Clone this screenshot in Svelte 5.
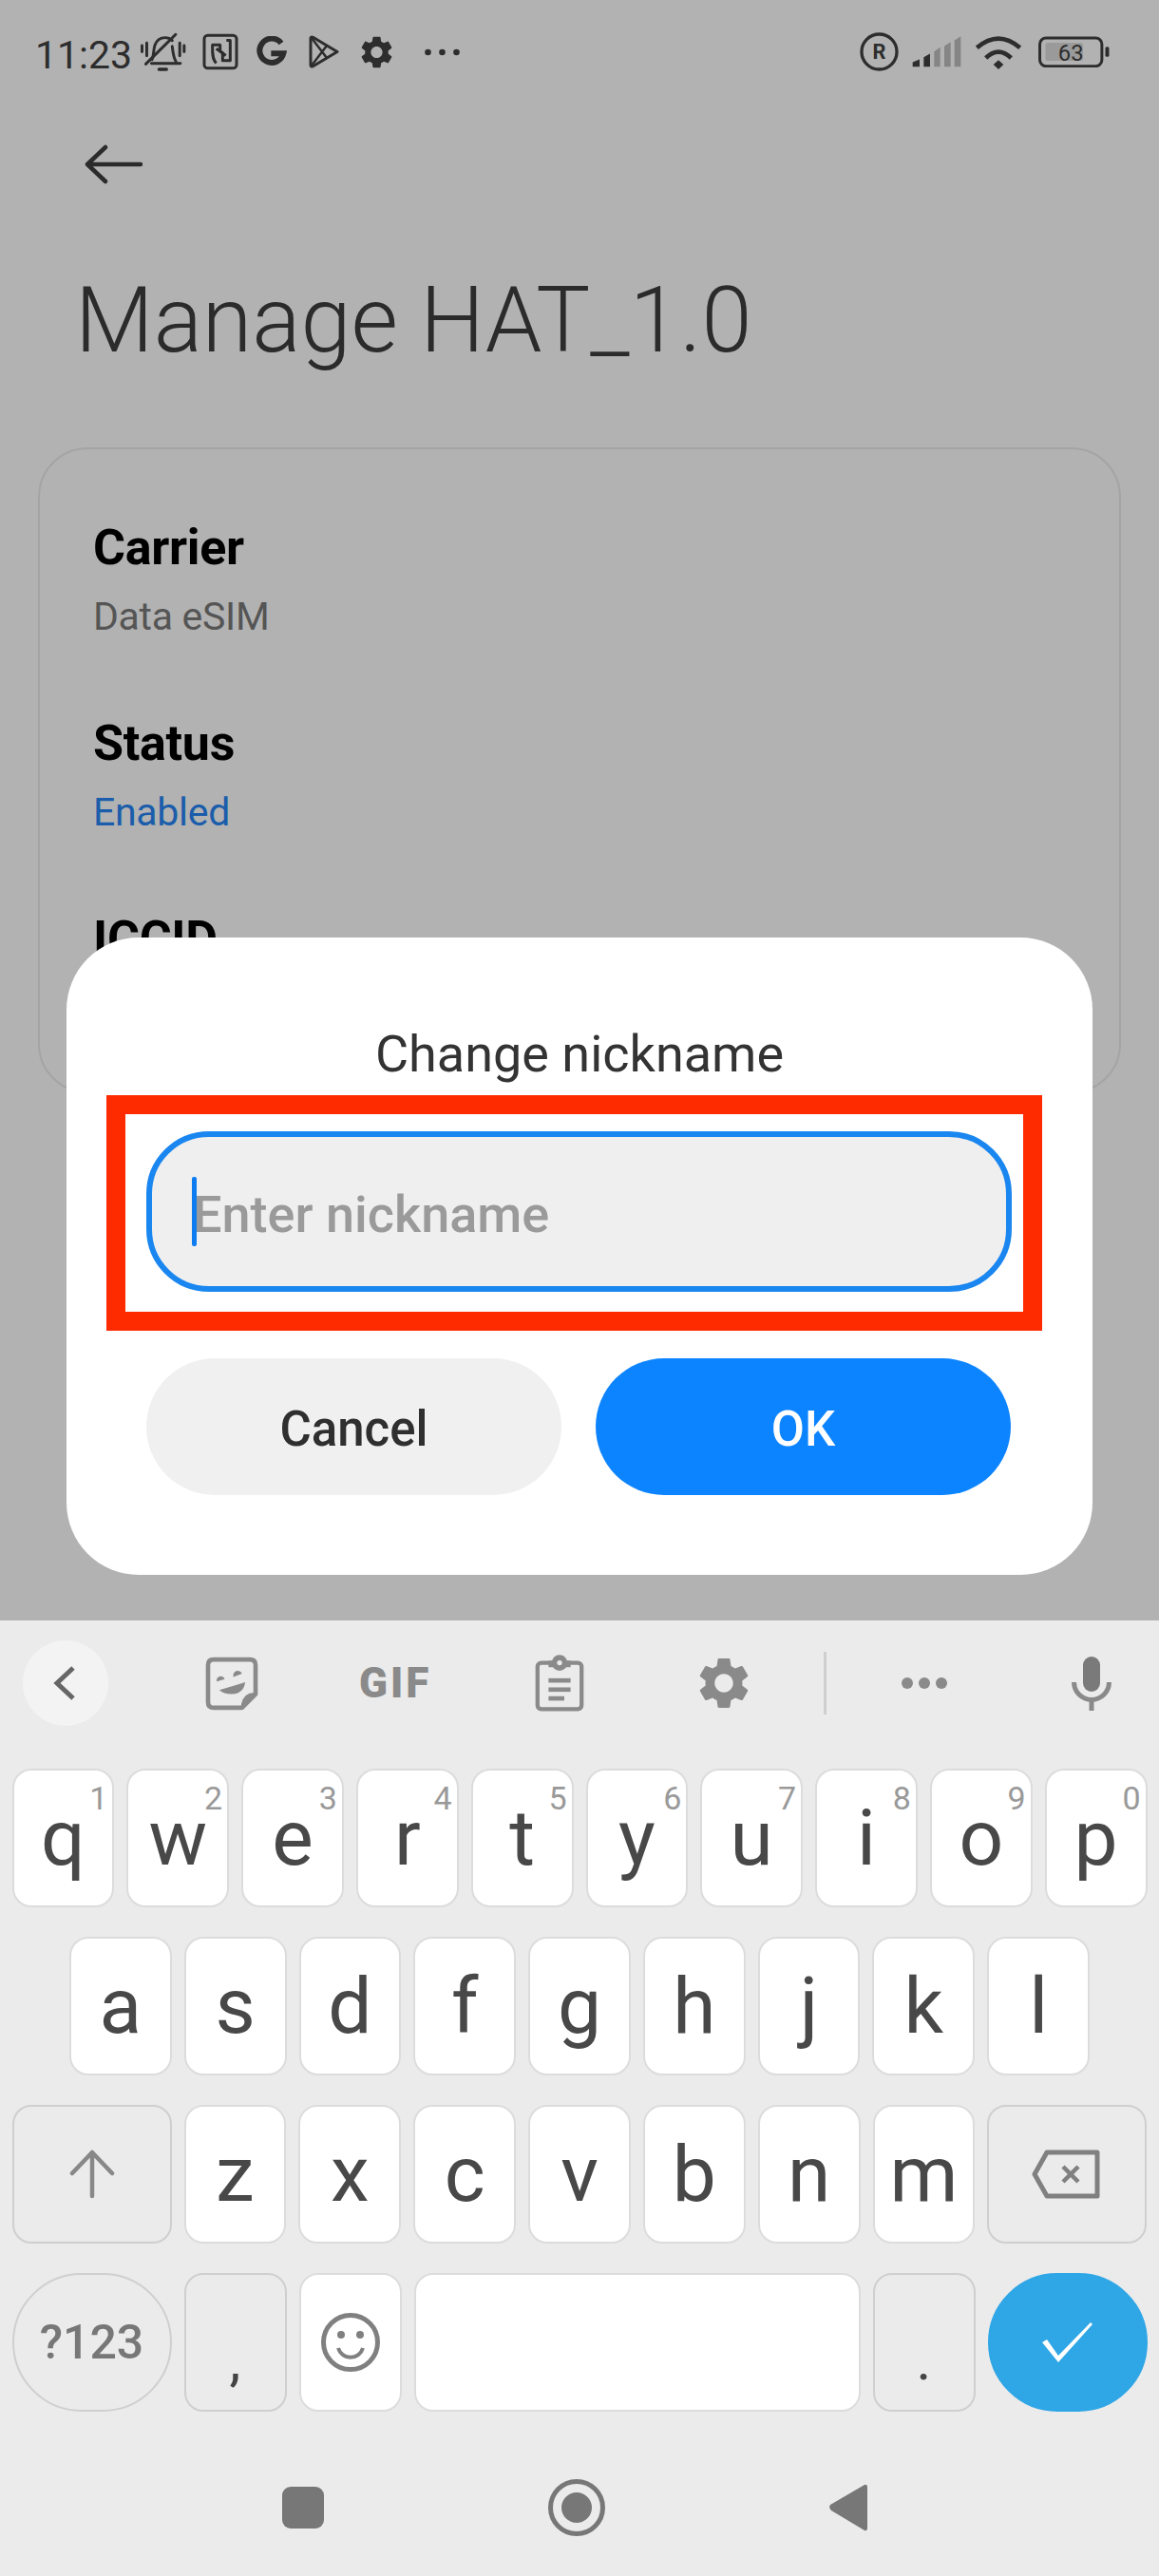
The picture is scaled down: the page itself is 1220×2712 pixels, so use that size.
<script lang="ts">
  const ROW1 = [
    ['q', '1'], ['w', '2'], ['e', '3'], ['r', '4'], ['t', '5'],
    ['y', '6'], ['u', '7'], ['i', '8'], ['o', '9'], ['p', '0'],
  ];
  const ROW2 = ['a', 's', 'd', 'f', 'g', 'h', 'j', 'k', 'l'];
  const ROW3 = ['z', 'x', 'c', 'v', 'b', 'n', 'm'];
  const GEAR =
    'M19.14 12.94c.04-.3.06-.61.06-.94 0-.32-.02-.64-.07-.94l2.03-1.58c.18-.14.23-.41.12-.61l-1.92-3.32c-.12-.22-.37-.29-.59-.22l-2.39.96c-.5-.38-1.03-.7-1.62-.94l-.36-2.54c-.04-.24-.24-.41-.48-.41h-3.84c-.24 0-.43.17-.47.41l-.36 2.54c-.59.24-1.13.57-1.62.94l-2.39-.96c-.22-.08-.47 0-.59.22L2.74 8.87c-.12.21-.08.47.12.61l2.03 1.58c-.05.3-.09.63-.09.94s.02.64.07.94l-2.03 1.58c-.18.14-.23.41-.12.61l1.92 3.32c.12.22.37.29.59.22l2.39-.96c.5.38 1.03.7 1.62.94l.36 2.54c.05.24.24.41.48.41h3.84c.24 0 .44-.17.47-.41l.36-2.54c.59-.24 1.13-.56 1.62-.94l2.39.96c.22.08.47 0 .59-.22l1.92-3.32c.12-.22.07-.47-.12-.61l-2.01-1.58zM12 15.6c-1.98 0-3.6-1.62-3.6-3.6s1.62-3.6 3.6-3.6 3.6 1.62 3.6 3.6-1.62 3.6-3.6 3.6z';
</script>

<div class="screen">
  <div class="page">
    <div class="status">
      <span class="time">11:23</span>
      <svg class="st-bell" viewBox="15 10 165 130" fill="none" stroke="#2d2d2d" stroke-width="9" stroke-linecap="round">
        <path d="M28 55V75M43 47V88M148 47V88M162 55V75" />
        <path d="M60 100c6-14 4-32 9-46 5-15 18-24 33-24 9 0 16 3 22 9M124 58c3 18 3 34 12 48" />
        <path d="M40 114L135 20M58 112H150" />
        <path d="M82 131H106" stroke-width="10" />
      </svg>
      <svg class="st-nfc" viewBox="218 14 114 116" fill="none" stroke="#2d2d2d" stroke-width="9" stroke-linejoin="round">
        <rect x="224" y="20" width="102" height="104" rx="11" />
        <path d="M262 108C248 95 250 70 250 50H274V70L292 84" />
        <path d="M294 36H306V100H282V76L262 62" />
      </svg>
      <svg class="st-g" viewBox="390 26 102 98" fill="none" stroke="#2d2d2d" stroke-width="18">
        <path d="M474 48A38 38 0 1 0 481 80H442" />
      </svg>
      <svg class="st-play" viewBox="0 0 33 35" fill="none" stroke="#2d2d2d" stroke-width="3" stroke-linejoin="round">
        <path d="M3 3.5c0-1.500 1-2 2.500-1.200L31 17.500 5.500 32.700C4 33.500 3 33 3 31.500z" />
        <path d="M4 3L20 24M4 32L20 11" stroke-width="2.500" />
      </svg>
      <svg class="st-gear" viewBox="2.400 2 19.200 20" fill="#2d2d2d"><path d={GEAR} /></svg>
      <svg class="st-dots" viewBox="0 0 37 8" fill="#2d2d2d">
        <circle cx="3.500" cy="4" r="3.300" /><circle cx="18.500" cy="4" r="3.300" /><circle cx="33.500" cy="4" r="3.300" />
      </svg>
      <svg class="st-reg" viewBox="20 14 124 124" fill="none">
        <circle cx="82" cy="76" r="56" stroke="#2d2d2d" stroke-width="10" />
        <text x="82" y="100" text-anchor="middle" class="reg-r">R</text>
      </svg>
      <svg class="st-signal" viewBox="188 26 156 98">
        <path d="M190 122V108L212 99V122Z" fill="#2d2d2d" />
        <path d="M225 122V92L245 81V122Z" fill="#2d2d2d" />
        <path d="M258 122V74L277 61V122Z" fill="#858585" />
        <path d="M290 122V57L310 44V122Z" fill="#858585" />
        <path d="M322 122V39L342 26V122Z" fill="#858585" />
      </svg>
      <svg class="st-wifi" viewBox="385 20 150 108" fill="none" stroke="#2d2d2d" stroke-width="14">
        <path d="M392 60Q460 2 528 60" />
        <path d="M420 92Q460 54 500 92" />
        <path d="M444 113L460 99L476 113L460 128Z" fill="#2d2d2d" stroke="none" />
      </svg>
      <svg class="st-batt" viewBox="583 24 230 100">
        <rect x="589" y="30" width="198" height="90" rx="20" fill="none" stroke="#2d2d2d" stroke-width="9" />
        <rect x="607" y="45" width="120" height="58" rx="7" fill="#9a9a9a" />
        <rect x="798" y="58" width="12" height="32" rx="5" fill="#2d2d2d" />
        <text x="688" y="103" text-anchor="middle" class="batt-n">63</text>
      </svg>
    </div>

    <svg class="back" viewBox="0 0 62 42" fill="none" stroke="#2b2b2b" stroke-width="4.500" stroke-linecap="round" stroke-linejoin="round">
      <path d="M3 21H59M22 3L3 21L22 39" />
    </svg>

    <h1>Manage HAT_1.0</h1>

    <div class="card">
      <div class="item"><div class="label">Carrier</div><div class="value">Data eSIM</div></div>
      <div class="item"><div class="label">Status</div><div class="value enabled">Enabled</div></div>
      <div class="item"><div class="label">ICCID</div></div>
    </div>

    <div class="dialog">
      <div class="dialog-title">Change nickname</div>
      <div class="annotation">
        <div class="field">
          <span class="caret"></span>
          <span class="placeholder">Enter nickname</span>
        </div>
      </div>
      <div class="actions">
        <div class="btn cancel">Cancel</div>
        <div class="btn ok">OK</div>
      </div>
    </div>
  </div>

  <div class="keyboard">
    <div class="toolbar">
      <div class="tb-back">
        <svg width="24" height="36" viewBox="0 0 24 36" fill="none" stroke="#666" stroke-width="5">
          <path d="M21 2L4 18L21 34" />
        </svg>
      </div>
      <svg class="tb-sticker" viewBox="48 41 169 171" fill="#8a8a8a">
        <path d="M165 203H75Q57 203 57 185V68Q57 50 75 50H190Q208 50 208 68V160Z" fill="none" stroke="#8a8a8a" stroke-width="14" stroke-linejoin="round" />
        <path d="M212 156Q165 150 160 208Z" />
        <path d="M85 120A13 13 0 0 1 110 112ZM138 105A13 13 0 0 1 165 95ZM93 147L175 122Q170 160 130 160Q108 160 93 147Z" />
      </svg>
      <span class="tb-gif">GIF</span>
      <svg class="tb-clip" viewBox="1093 36 154 181" fill="#8a8a8a">
        <rect x="1100" y="62" width="140" height="147" rx="12" fill="none" stroke="#8a8a8a" stroke-width="13" />
        <circle cx="1170" cy="62" r="25" />
        <rect x="1135" y="55" width="70" height="21" />
        <circle cx="1170" cy="62" r="8" fill="#ebebeb" />
        <rect x="1135" y="111" width="70" height="14" />
        <rect x="1135" y="140" width="70" height="14" />
        <rect x="1135" y="168" width="50" height="14" />
      </svg>
      <svg class="tb-gear" viewBox="2.400 2 19.200 20" fill="#8a8a8a"><path d={GEAR} /></svg>
      <div class="tb-divider"></div>
      <svg class="tb-dots" viewBox="0 0 48 14" fill="#8a8a8a">
        <circle cx="6" cy="7" r="6" /><circle cx="24" cy="7" r="6" /><circle cx="42" cy="7" r="6" />
      </svg>
      <svg class="tb-mic" viewBox="0 0 42 57" fill="none">
        <rect x="12" y="0" width="18" height="37" rx="9" fill="#7a7a7a" />
        <path d="M2.500 27A18.500 18.500 0 0 0 39.500 27M21 46V57" stroke="#8a8a8a" stroke-width="5" />
      </svg>
    </div>

    <div class="rows">
      <div class="row row-top">
        {#each ROW1 as [letter, digit]}
          <div class="key"><sup class="digit">{digit}</sup>{letter}</div>
        {/each}
      </div>
      <div class="row row-home">
        {#each ROW2 as letter}
          <div class="key">{letter}</div>
        {/each}
      </div>
      <div class="row row-shift">
        <div class="key fn">
          <svg width="48" height="52" viewBox="0 0 48 52" fill="none" stroke="#888" stroke-width="4.500" stroke-linecap="round" stroke-linejoin="round">
            <path d="M24 3V49M3 25L24 3L45 25" />
          </svg>
        </div>
        {#each ROW3 as letter}
          <div class="key">{letter}</div>
        {/each}
        <div class="key fn">
          <svg class="del" width="72" height="52" viewBox="0 0 72 52" fill="none" stroke="#808080" stroke-width="5" stroke-linejoin="round">
            <path d="M16 3H69V49H16L3 26Z" />
            <path d="M33 18L49 34M49 18L33 34" stroke-width="4.500" />
          </svg>
        </div>
      </div>
      <div class="row row-bottom">
        <div class="key fn pill sym">?123</div>
        <div class="key fn punct">,</div>
        <div class="key">
          <svg width="64" height="64" viewBox="0 0 64 64" fill="none" stroke="#808080" stroke-width="5">
            <circle cx="32" cy="32" r="28.500" />
            <circle cx="22" cy="24" r="4" fill="#808080" stroke="none" />
            <circle cx="42" cy="24" r="4" fill="#808080" stroke="none" />
            <path d="M19 38A13.500 13.500 0 0 0 45 38" stroke-width="4" />
          </svg>
        </div>
        <div class="key"></div>
        <div class="key fn punct">.</div>
        <div class="key pill enter">
          <svg width="56" height="44" viewBox="0 0 56 44" fill="#fff">
            <path d="M1 22L6 19L18 36L52 1L54 3L18 43Z" />
          </svg>
        </div>
      </div>
    </div>

    <div class="navbar">
      <div class="nav-square"></div>
      <div class="nav-home"></div>
      <svg width="40" height="50" viewBox="0 0 40 50" fill="#777"><path d="M37 1Q40 0 40 4V46Q40 50 37 49L2 28Q-1 25 1 22Z" /></svg>
    </div>
  </div>
</div>

<style>
  :global(body) {
    margin: 0;
    background: #ebebeb;
  }

  .screen {
    width: 1220px;
    height: 2712px;
    display: flex;
    flex-direction: column;
    overflow: hidden;
    font-family: Roboto, 'Liberation Sans', sans-serif;
  }

  .page {
    position: relative;
    height: 1706px;
    flex-shrink: 0;
    overflow: hidden;
    background: #b2b2b2;
  }

  /* status bar */
  .status {
    height: 109px;
    display: flex;
    align-items: center;
    padding-left: 37px;
    box-sizing: border-box;
  }

  .time {
    width: 100px;
    margin-top: 6px;
    font-size: 41px;
    line-height: 46px;
    color: #2d2d2d;
  }

  .st-bell { width: 55px; height: 43px; margin-left: 8px; }
  .st-nfc { width: 38px; height: 39px; margin-left: 13px; }
  .st-g { width: 34px; height: 33px; margin-left: 17px; }
  .st-play { width: 33px; height: 35px; margin-left: 22px; }
  .st-gear { width: 33px; height: 34px; margin-left: 23px; }
  .st-dots { width: 37px; height: 8px; margin-left: 34px; }
  .st-reg { width: 41px; height: 41px; margin-left: 421px; }
  .st-signal { width: 52px; height: 33px; margin-left: 14px; }
  .st-wifi { width: 50px; height: 36px; margin-left: 14px; }
  .st-batt { width: 77px; height: 33px; margin-left: 16px; }

  .reg-r {
    font-size: 66px;
    font-weight: 700;
    fill: #2d2d2d;
  }

  .batt-n {
    font-size: 72px;
    fill: #2d2d2d;
  }

  /* page behind the dialog */
  .back {
    display: block;
    width: 62px;
    height: 42px;
    margin: 43px 0 0 89px;
  }

  h1 {
    margin: 88px 0 0 79px;
    font-size: 95.5px;
    line-height: 110px;
    font-weight: 300;
    color: #2b2b2b;
    white-space: nowrap;
  }

  .card {
    width: 1140px;
    height: 680px;
    margin: 79px 0 0 40px;
    padding: 73px 0 0 56px;
    box-sizing: border-box;
    border: 2px solid #a4a4a4;
    border-radius: 52px;
    overflow: hidden;
  }

  .item {
    margin-bottom: 78px;
  }

  .label {
    font-size: 52px;
    line-height: 62px;
    font-weight: 700;
    letter-spacing: -0.3px;
    color: #000;
  }

  .value {
    margin-top: 16px;
    font-size: 41px;
    line-height: 50px;
    letter-spacing: -0.3px;
    color: #555;
  }

  .enabled {
    color: #1b5dab;
  }

  /* dialog */
  .dialog {
    position: absolute;
    left: 70px;
    top: 987px;
    width: 1080px;
    height: 671px;
    background: #fff;
    border-radius: 76px;
  }

  .dialog-title {
    height: 166px;
    padding-top: 93px;
    box-sizing: border-box;
    text-align: center;
    font-size: 54px;
    line-height: 60px;
    color: #333;
  }

  .annotation {
    width: 985px;
    height: 248px;
    margin-left: 42px;
    padding: 18px 0 0 22px;
    box-sizing: border-box;
    border: 20px solid #ff2b00;
  }

  .field {
    position: relative;
    width: 911px;
    height: 169px;
    display: flex;
    align-items: center;
    padding: 6px 0 0 43px;
    box-sizing: border-box;
    border: 6px solid #1a86f0;
    border-radius: 66px;
    background: #efefef;
  }

  .caret {
    position: absolute;
    left: 42px;
    top: 42px;
    width: 5px;
    height: 73px;
    border-radius: 2px;
    background: #0d7cf0;
  }

  .placeholder {
    font-size: 54px;
    font-weight: 500;
    color: #9a9a9a;
  }

  .actions {
    display: flex;
    gap: 36px;
    margin: 29px 0 0 84px;
  }

  .btn {
    width: 437px;
    height: 144px;
    padding-top: 5px;
    box-sizing: border-box;
    border-radius: 72px;
    display: flex;
    align-items: center;
    justify-content: center;
    font-size: 51px;
    font-weight: 500;
  }

  .cancel {
    background: #f0f0f0;
    color: #2f2f2f;
  }

  .ok {
    background: #0d84ff;
    color: #fff;
  }

  /* keyboard */
  .keyboard {
    flex: 1;
    background: #ebebeb;
  }

  .toolbar {
    height: 132px;
    display: flex;
    align-items: center;
    margin-bottom: 24px;
  }

  .tb-back {
    width: 90px;
    height: 90px;
    margin-left: 24px;
    border-radius: 50%;
    background: #f3f3f3;
    display: flex;
    align-items: center;
    justify-content: center;
  }

  .tb-back svg { margin-left: -2px; }
  .tb-sticker { width: 56px; height: 57px; margin-left: 102px; }

  .tb-gif {
    width: 72px;
    margin-left: 106px;
    font-size: 44px;
    line-height: 44px;
    font-weight: 900;
    letter-spacing: 3px;
    color: #8a8a8a;
    white-space: nowrap;
  }

  .tb-clip { width: 52px; height: 60px; margin-left: 113px; }
  .tb-gear { width: 54px; height: 54px; margin-left: 120px; }

  .tb-divider {
    width: 3px;
    height: 66px;
    margin-left: 78px;
    background: #cfcfcf;
  }

  .tb-dots { width: 48px; height: 14px; margin-left: 79px; }
  .tb-mic { width: 42px; height: 57px; margin-left: 131px; }

  .rows {
    display: flex;
    flex-direction: column;
    gap: 31px;
    padding: 0 12.5px;
  }

  .row {
    display: grid;
    gap: 13px;
    height: 146px;
  }

  .row-top { grid-template-columns: repeat(10, 1fr); }
  .row-home { grid-template-columns: repeat(9, 1fr); padding: 0 60.5px; }
  .row-shift { grid-template-columns: 168px repeat(7, 1fr) 168px; }
  .row-bottom { grid-template-columns: 168px 108px 108px 1fr 108px 168px; }

  .key {
    position: relative;
    box-sizing: border-box;
    display: flex;
    align-items: center;
    justify-content: center;
    border: 2px solid #dcdcdc;
    border-radius: 20px;
    background: #fff;
    font-size: 82px;
    font-weight: 370;
    line-height: 1;
    color: #484848;
  }

  .digit {
    position: absolute;
    top: 9px;
    right: 5px;
    font-size: 34px;
    font-weight: 400;
    line-height: 40px;
    color: #999;
  }

  .del {
    margin-left: -2px;
  }

  .fn {
    background: #ebebeb;
    border-color: #cfcfcf;
  }

  .pill {
    border-radius: 73px;
  }

  .sym {
    font-size: 50px;
    font-weight: 500;
    color: #777;
  }

  .punct {
    align-items: flex-end;
    padding-bottom: 22px;
    font-size: 60px;
    color: #444;
  }

  .enter {
    background: #2fa6e6;
    border-color: #2fa6e6;
  }

  .navbar {
    display: flex;
    align-items: center;
    gap: 236px;
    margin-top: 71px;
    padding-left: 297px;
  }

  .nav-square {
    width: 44px;
    height: 44px;
    border-radius: 9px;
    background: #777;
  }

  .nav-home {
    width: 60px;
    height: 60px;
    box-sizing: border-box;
    border: 5px solid #777;
    border-radius: 50%;
    display: flex;
    position: relative;
  }

  .nav-home::after {
    content: '';
    width: 32px;
    height: 32px;
    margin: auto;
    border-radius: 50%;
    background: #777;
  }
</style>
